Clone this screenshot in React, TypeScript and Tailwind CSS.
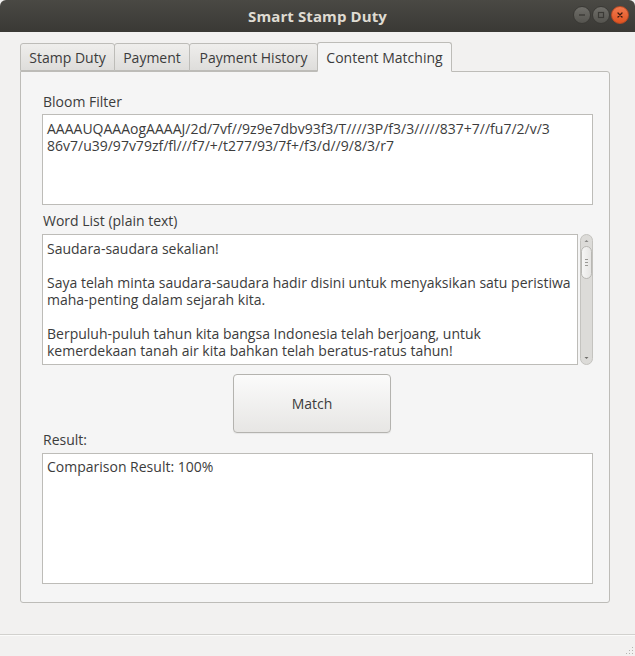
import React from "react";

const font = { fontFamily: '"Open Sans", "Noto Sans", sans-serif' };

const tabs = [
  { name: "Stamp Duty", w: "w-[95px]" },
  { name: "Payment", w: "w-[76px]" },
  { name: "Payment History", w: "w-[129px]" },
  { name: "Content Matching", w: "w-[135px]" },
];

const bloom = [
  "AAAAUQAAAogAAAAJ/2d/7vf//9z9e7dbv93f3/T////3P/f3/3/////837+7//fu7/2/v/3",
  "86v7/u39/97v79zf/fl///f7/+/t277/93/7f+/f3/d//9/8/3/r7",
];

const words = [
  "Saudara-saudara sekalian!",
  "",
  "Saya telah minta saudara-saudara hadir disini untuk menyaksikan satu peristiwa",
  "maha-penting dalam sejarah kita.",
  "",
  "Berpuluh-puluh tahun kita bangsa Indonesia telah berjoang, untuk",
  "kemerdekaan tanah air kita bahkan telah beratus-ratus tahun!",
];

// Title bar window buttons
const WinButton = ({ kind }: { kind: "min" | "max" | "close" }) => (
  <div
    className={`w-[18px] h-[18px] rounded-full flex items-center justify-center border ${
      kind === "close"
        ? "bg-gradient-to-b from-[#f0794d] to-[#e0531f] border-[#b94a24]"
        : "bg-gradient-to-b from-[#6f6e69] to-[#55544f] border-[#3a3935]"
    }`}
  >
    <svg width="10" height="10" viewBox="0 0 10 10">
      {kind === "min" && <line x1="2" y1="5" x2="8" y2="5" stroke="#3b3a36" strokeWidth="1.4" />}
      {kind === "max" && <rect x="2.5" y="2.5" width="5" height="5" fill="none" stroke="#3b3a36" strokeWidth="1.2" />}
      {kind === "close" && (
        <path d="M3 3 L7 7 M7 3 L3 7" stroke="#3b1a0e" strokeWidth="1.3" strokeLinecap="round" />
      )}
    </svg>
  </div>
);

const Label = ({ children }: { children: React.ReactNode }) => (
  <div className="h-[18px] leading-[18px] text-[14px] text-[#3c3c3c] pl-[1px]">{children}</div>
);

export default function App() {
  return (
    <div className="w-[635px] h-[656px] flex flex-col bg-[#f2f1f0] overflow-hidden" style={font}>
      {/* Title bar */}
      <div className="h-[32px] shrink-0 relative flex items-center justify-center bg-gradient-to-b from-[#4a4944] to-[#3a3935] rounded-t-[6px]">
        <span className="text-[15px] font-bold text-[#dfdbd2] tracking-[0.1px]">Smart Stamp Duty</span>
        <div className="absolute right-[6px] top-[6px] flex gap-[1px]">
          <WinButton kind="min" />
          <WinButton kind="max" />
          <WinButton kind="close" />
        </div>
      </div>

      {/* Content */}
      <div className="flex-1 px-[20px] pt-[10px]">
        <div className="flex items-end h-[29px]">
          {tabs.map((t, i) => {
            const active = i === tabs.length - 1;
            return (
              <div
                key={t.name}
                className={`${t.w} text-[14px] text-[#3c3c3c] border border-[#bdbcb8] rounded-t-[3px] -mr-[1px] flex items-center justify-center ${
                  active
                    ? "h-[30px] bg-[#f5f5f5] border-b-[#f5f5f5] relative z-10 -mb-[1px]"
                    : "h-[28px] bg-gradient-to-b from-[#efeeec] to-[#dedddb]"
                }`}
              >
                {t.name}
              </div>
            );
          })}
        </div>

        {/* Panel */}
        <div className="w-[590px] h-[532px] border border-[#bdbcb8] rounded-b-[3px] rounded-tr-[3px] bg-[#f5f5f5] pl-[21px] pr-[16px] pt-[21px] flex flex-col">
          <Label>Bloom Filter</Label>
          <div className="mt-[3px] h-[91px] bg-white border border-[#bdbcb8] px-[4px] pt-[5px] text-[14px] leading-[17px] text-[#3c3c3c] whitespace-pre overflow-hidden">
            {bloom.join("\n")}
          </div>

          <div className="mt-[7px]">
            <Label>Word List (plain text)</Label>
          </div>
          <div className="mt-[4px] h-[131px] flex">
            <div className="flex-1 bg-white border border-[#bdbcb8] px-[4px] pt-[5px] text-[14px] leading-[17px] text-[#3c3c3c] whitespace-pre overflow-hidden">
              {words.join("\n")}
            </div>
            {/* Scrollbar */}
            <div className="w-[13px] ml-[2px] rounded-full border border-[#c4c3bf] bg-[#dcdbd8] flex flex-col items-center">
              <svg width="11" height="11" viewBox="0 0 11 11" className="shrink-0">
                <path d="M3.5 7 L5.5 5 L7.5 7 Z" fill="#8a8986" />
              </svg>
              <div className="w-[11px] h-[33px] rounded-full bg-gradient-to-r from-[#f6f6f5] to-[#e6e5e3] border border-[#b9b8b4] flex flex-col items-center justify-center gap-[2px]">
                <div className="w-[3px] h-[1px] bg-[#9a9995]" />
                <div className="w-[3px] h-[1px] bg-[#9a9995]" />
                <div className="w-[3px] h-[1px] bg-[#9a9995]" />
              </div>
              <div className="flex-1" />
              <svg width="11" height="11" viewBox="0 0 11 11" className="shrink-0">
                <path d="M3.5 4 L5.5 6 L7.5 4 Z" fill="#6e6d6a" />
              </svg>
            </div>
          </div>

          <div className="mt-[9px] flex">
            <button className="ml-[191px] w-[158px] h-[59px] rounded-[4px] border border-[#b4b3af] bg-gradient-to-b from-[#fbfbfb] to-[#e7e6e4] text-[14px] text-[#3c3c3c] shadow-[0_1px_1px_rgba(0,0,0,0.06)]">
              Match
            </button>
          </div>

          <div className="-mt-[2px]">
            <Label>Result:</Label>
          </div>
          <div className="mt-[4px] h-[131px] bg-white border border-[#bdbcb8] px-[4px] pt-[4px] text-[14px] leading-[17px] text-[#3c3c3c] overflow-hidden">
            Comparison Result: 100%
          </div>
        </div>
      </div>

      {/* Status bar */}
      <div className="h-[22px] shrink-0 border-t border-[#d2d1ce] relative">
        <div className="h-[1px] bg-[#fbfbfa]" />
        <div className="absolute right-[2px] bottom-[2px] grid grid-cols-3 gap-[2px]">
          {[0, 0, 1, 0, 1, 1, 1, 1, 1].map((v, i) => (
            <div key={i} className={`w-[1px] h-[1px] ${v ? "bg-[#b5b4b0]" : "bg-transparent"}`} />
          ))}
        </div>
      </div>
    </div>
  );
}
